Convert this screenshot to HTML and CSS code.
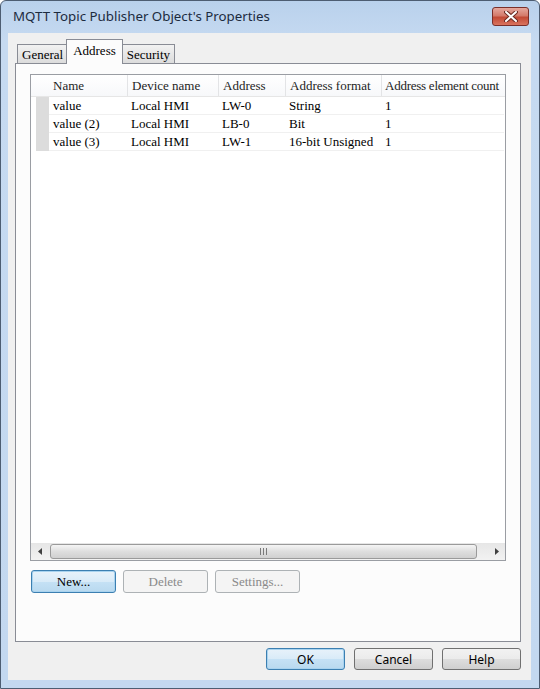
FILE: index.html
```html
<!DOCTYPE html>
<html lang="en">
<head>
    <meta charset="UTF-8">
    <title>MQTT Topic Publisher Object's Properties</title>
    <link rel="stylesheet" href="styles.css">
</head>
<body>
    <div class="window">
        <div class="titlebar">
            <div class="title">MQTT Topic Publisher Object's Properties</div>
            <div class="close-btn">
                <svg width="14" height="11" viewBox="0 0 14 11">
                    <path d="M2,1 L12,10 M12,1 L2,10" stroke="#6b2a22" stroke-width="4" stroke-linecap="round"/>
                    <path d="M2,1 L12,10 M12,1 L2,10" stroke="#ffffff" stroke-width="2" stroke-linecap="round"/>
                </svg>
            </div>
        </div>
        <div class="client">
            <div class="tabs">
                <div class="tab">General</div>
                <div class="tab active">Address</div>
                <div class="tab">Security</div>
            </div>
            <div class="panel">
                <div class="list">
                    <div class="list-head">
                        <div class="row-gutter"></div>
                        <div class="col col-name">Name</div>
                        <div class="col col-device">Device name</div>
                        <div class="col col-addr">Address</div>
                        <div class="col col-format">Address format</div>
                        <div class="col col-count">Address element count</div>
                    </div>
                    <div class="list-body">
                        <div class="selector"></div>
                        <div class="rows">
                            <div class="row">
                                <div class="col col-name">value</div>
                                <div class="col col-device">Local HMI</div>
                                <div class="col col-addr">LW-0</div>
                                <div class="col col-format">String</div>
                                <div class="col col-count">1</div>
                            </div>
                            <div class="row">
                                <div class="col col-name">value (2)</div>
                                <div class="col col-device">Local HMI</div>
                                <div class="col col-addr">LB-0</div>
                                <div class="col col-format">Bit</div>
                                <div class="col col-count">1</div>
                            </div>
                            <div class="row">
                                <div class="col col-name">value (3)</div>
                                <div class="col col-device">Local HMI</div>
                                <div class="col col-addr">LW-1</div>
                                <div class="col col-format">16-bit Unsigned</div>
                                <div class="col col-count">1</div>
                            </div>
                        </div>
                    </div>
                    <div class="hscroll">
                        <div class="arrow">
                            <svg width="4" height="7" viewBox="0 0 4 7"><path d="M4,0 L0,3.5 L4,7 Z" fill="#404040"/></svg>
                        </div>
                        <div class="thumb">
                            <svg width="7" height="7" viewBox="0 0 7 7"><path d="M0.5,0 V7 M3.5,0 V7 M6.5,0 V7" stroke="#7a7a7a" stroke-width="1"/></svg>
                        </div>
                        <div class="arrow">
                            <svg width="4" height="7" viewBox="0 0 4 7"><path d="M0,0 L4,3.5 L0,7 Z" fill="#404040"/></svg>
                        </div>
                    </div>
                </div>
                <div class="actions">
                    <div class="btn focused">New...</div>
                    <div class="btn disabled">Delete</div>
                    <div class="btn disabled">Settings...</div>
                </div>
            </div>
            <div class="footer">
                <div class="dlg-btn focused">OK</div>
                <div class="dlg-btn">Cancel</div>
                <div class="dlg-btn">Help</div>
            </div>
        </div>
    </div>
</body>
</html>
```

FILE: styles.css
```css
body {
    margin: 0;
    padding: 0;
    background-color: #ffffff;
}
.window {
    width: 540px;
    height: 689px;
    box-sizing: border-box;
    border: 1px solid #4d5d72;
    border-radius: 6px 6px 0 0;
    background: linear-gradient(to bottom, #b9d1ec 0px, #c6daf1 40px, #c3d8f0 100%);
    display: flex;
    flex-direction: column;
}
.titlebar {
    height: 32px;
    display: flex;
    justify-content: space-between;
    align-items: center;
    padding: 0 10px 0 12px;
}
.title {
    font-family: "Noto Sans", sans-serif;
    font-size: 13.3px;
    color: #1c2b3e;
    padding-bottom: 2px;
}
.close-btn {
    width: 35px;
    height: 17px;
    border: 1px solid #7a2f2a;
    border-radius: 3px;
    background: linear-gradient(to bottom, #e5a89e 0%, #d47a6b 45%, #c24a36 55%, #d9735e 100%);
    display: flex;
    justify-content: center;
    align-items: center;
    margin-top: -2px;
}
.client {
    flex: 1;
    margin: 0 8px 8px 7px;
    background-color: #f0f0f0;
    display: flex;
    flex-direction: column;
    padding: 0 10px 0 7px;
}
.tabs {
    display: flex;
    align-items: flex-end;
    height: 24px;
    margin-top: 6px;
    padding-left: 2px;
}
.tab {
    height: 19px;
    box-sizing: border-box;
    padding: 2px 4px 0 4px;
    border: 1px solid #898c95;
    border-bottom: none;
    background: linear-gradient(to bottom, #f2f2f2, #dcdcdc);
    font-family: "Liberation Serif", serif;
    font-size: 13px;
    color: #000;
    margin-right: -1px;
}
.tab.active {
    height: 25px;
    padding: 3px 6px 0 6px;
    background: #fcfcfc;
    margin: 0 -1px -1px -1px;
    position: relative;
    z-index: 1;
}
.panel {
    flex: 1;
    border: 1px solid #898c95;
    background-color: #fcfcfc;
    padding: 10px 14px 0 14px;
    display: flex;
    flex-direction: column;
}
.list {
    height: 487px;
    box-sizing: border-box;
    border: 1px solid #9a9da3;
    background-color: #ffffff;
    display: flex;
    flex-direction: column;
    font-family: "Liberation Serif", serif;
    font-size: 13px;
    color: #000;
}
.list-head {
    display: flex;
    height: 21px;
    align-items: stretch;
    background: linear-gradient(to bottom, #ffffff, #f7f8fa);
    border-bottom: 1px solid #e6e6e6;
}
.list-head .col {
    border-left: 1px solid #e3e4e6;
    color: #1e1e1e;
    line-height: 21px;
}
.list-head .col-name {
    border-left: none;
}
.list-head .col-count {
    letter-spacing: -0.25px;
    padding-left: 3px;
}
.row-gutter {
    width: 18px;
}
.col {
    box-sizing: border-box;
    padding-left: 4px;
    white-space: nowrap;
}
.col-name { width: 78px; }
.col-device { width: 91px; }
.col-addr { width: 67px; }
.col-format { width: 96px; }
.col-count { width: 123px; }
.list-body {
    flex: 1;
    display: flex;
    align-items: flex-start;
    padding-left: 5px;
}
.selector {
    width: 13px;
    height: 54px;
    background-color: #dcdcdc;
}
.row {
    display: flex;
    height: 18px;
    line-height: 17px;
    border-bottom: 1px solid #f0f0f0;
    box-sizing: border-box;
}
.hscroll {
    height: 17px;
    display: flex;
    align-items: center;
    background: linear-gradient(to bottom, #e6e6e6, #f2f2f2);
}
.arrow {
    width: 17px;
    height: 17px;
    display: flex;
    justify-content: center;
    align-items: center;
}
.thumb {
    flex: 1;
    height: 13px;
    margin: 0 11px 0 2px;
    border: 1px solid #9a9a9a;
    border-radius: 3px;
    background: linear-gradient(to bottom, #f5f5f5, #dedede 50%, #d0d0d0);
    display: flex;
    justify-content: center;
    align-items: center;
}
.actions {
    display: flex;
    gap: 7px;
    margin-top: 9px;
    padding-left: 1px;
}
.btn {
    width: 85px;
    height: 23px;
    box-sizing: border-box;
    border: 1px solid #707070;
    border-radius: 3px;
    background: linear-gradient(to bottom, #f2f2f2, #ebebeb 50%, #dddddd 51%, #cfcfcf);
    font-family: "Liberation Serif", serif;
    font-size: 13px;
    display: flex;
    justify-content: center;
    align-items: center;
    color: #000;
}
.btn.focused {
    border-color: #3c7fb1;
    background: linear-gradient(to bottom, #e8f2fa, #d9ebf8 50%, #c5e1f5 51%, #b9d9ef);
    box-shadow: inset 0 0 0 1px #a9d3ef;
}
.btn.disabled {
    border-color: #adb2b5;
    background: #f4f4f4;
    color: #8a8a8a;
}
.footer {
    display: flex;
    justify-content: flex-end;
    gap: 9px;
    padding: 6px 0 10px 0;
}
.dlg-btn {
    width: 79px;
    height: 22px;
    box-sizing: border-box;
    border: 1px solid #707070;
    border-radius: 3px;
    background: linear-gradient(to bottom, #f2f2f2, #ebebeb 50%, #dddddd 51%, #cfcfcf);
    font-family: "Noto Sans", sans-serif;
    font-size: 12px;
    color: #000;
    display: flex;
    justify-content: center;
    align-items: center;
}
.dlg-btn.focused {
    border-color: #3c7fb1;
    background: linear-gradient(to bottom, #e8f2fa, #d9ebf8 50%, #c5e1f5 51%, #b9d9ef);
    box-shadow: inset 0 0 0 1px #a9d3ef;
}
```
